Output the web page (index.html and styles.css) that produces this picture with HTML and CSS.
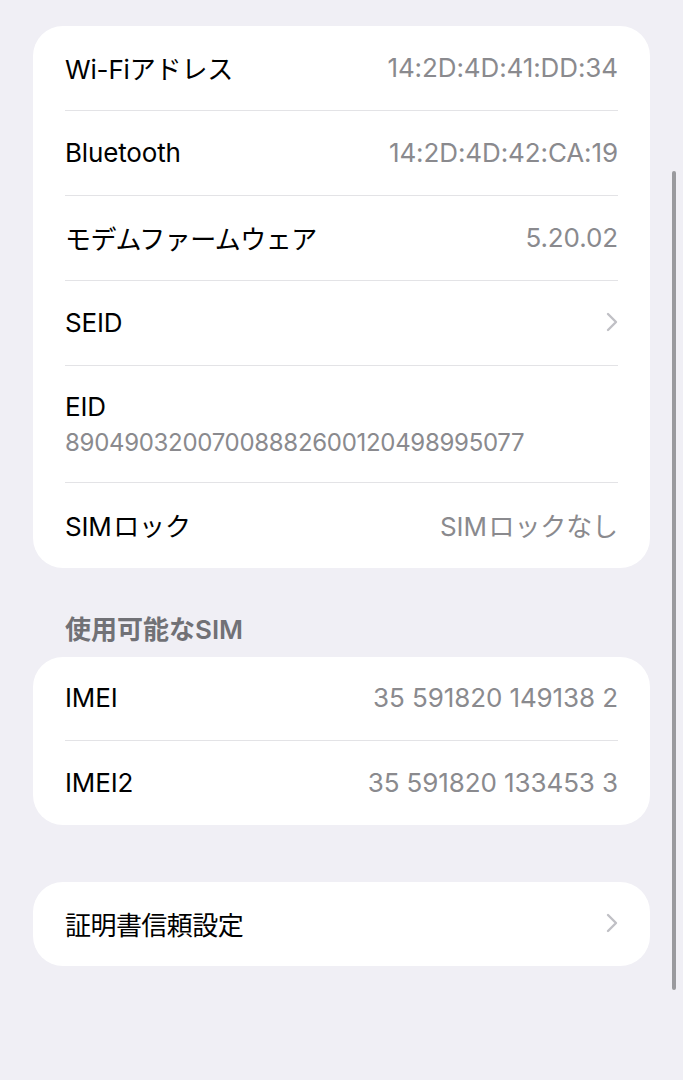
FILE: index.html
```html
<!DOCTYPE html>
<html lang="ja">
<head>
<meta charset="utf-8">
<title>情報</title>
<link rel="stylesheet" href="styles.css">
</head>
<body>
<main class="page">
  <section class="card card-main">
    <div class="row"><span class="label">Wi-Fiアドレス</span><span class="value">14:2D:4D:41:DD:34</span></div>
    <div class="row"><span class="label">Bluetooth</span><span class="value">14:2D:4D:42:CA:19</span></div>
    <div class="row"><span class="label jp">モデムファームウェア</span><span class="value">5.20.02</span></div>
    <div class="row"><span class="label">SEID</span>
      <svg class="chev" viewBox="0 0 12 20" width="12" height="20"><path d="M2 2 L10 10 L2 18" fill="none" stroke="currentColor" stroke-width="2.4" stroke-linecap="round" stroke-linejoin="round"/></svg>
    </div>
    <div class="row row-stack"><span class="label">EID</span><span class="sub">89049032007008882600120498995077</span></div>
    <div class="row"><span class="label">SIM<span class="thin"> </span>ロック</span><span class="value">SIM<span class="thin"> </span>ロックなし</span></div>
  </section>

  <h2 class="section-title">使用可能なSIM</h2>
  <section class="card">
    <div class="row"><span class="label">IMEI</span><span class="value">35 591820 149138 2</span></div>
    <div class="row"><span class="label">IMEI2</span><span class="value">35 591820 133453 3</span></div>
  </section>

  <section class="card card-gap">
    <div class="row"><span class="label jp">証明書信頼設定</span>
      <svg class="chev" viewBox="0 0 12 20" width="12" height="20"><path d="M2 2 L10 10 L2 18" fill="none" stroke="currentColor" stroke-width="2.4" stroke-linecap="round" stroke-linejoin="round"/></svg>
    </div>
  </section>
</main>
<div class="scrollbar"></div>
</body>
</html>
```

FILE: styles.css
```css
html, body {
  margin: 0;
  padding: 0;
}
body {
  background: #f0eff5;
  font-family: "Inter", "Noto Sans CJK JP", sans-serif;
  color: #000;
  min-height: 1080px;
  position: relative;
}
.page {
  padding: 26px 33px 0 33px;
  display: flex;
  flex-direction: column;
}
.card {
  background: #fff;
  border-radius: 30px;
  padding: 0 32px;
}
.row {
  display: flex;
  align-items: center;
  justify-content: space-between;
  min-height: 84px;
  border-bottom: 1px solid #e3e3e6;
  box-sizing: border-box;
  padding-bottom: 2px;
}
.card-main .row {
  min-height: 85px;
}
.row:last-child {
  border-bottom: none;
}
.label {
  font-size: 26px;
  letter-spacing: -0.15px;
}
.label.jp {
  letter-spacing: -0.55px;
}
.thin {
  font-size: 6px;
}
.value {
  font-size: 26px;
  color: #8a8a8e;
  letter-spacing: -0.1px;
}
.card-main .row-stack {
  flex-direction: column;
  align-items: flex-start;
  justify-content: center;
  min-height: 117px;
  gap: 6px;
  padding-top: 1px;
  padding-bottom: 1px;
}
.sub {
  font-size: 24px;
  color: #8a8a8e;
  letter-spacing: -0.3px;
}
.chev {
  color: #c0c0c5;
  margin-right: 0;
}
.section-title {
  margin: 47px 0 12px 32px;
  font-size: 26px;
  font-weight: 600;
  color: #717176;
  line-height: 30px;
}
.card-gap {
  margin-top: 57px;
}
.scrollbar {
  position: absolute;
  left: 672px;
  top: 171px;
  width: 4px;
  height: 819px;
  background: #9a9a9e;
  border-radius: 2px;
}
```
